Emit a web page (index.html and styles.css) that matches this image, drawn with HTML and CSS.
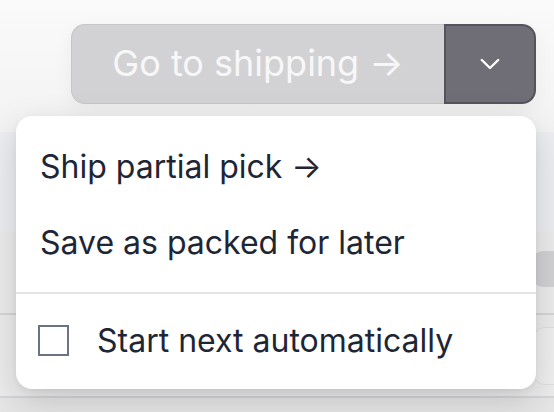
FILE: index.html
```html
<!DOCTYPE html>
<html>
<head>
<meta charset="utf-8">
<link rel="stylesheet" href="styles.css">
</head>
<body>
<div class="page">
  <div class="top"></div>
  <div class="card"></div>
  <div class="row row-a"><span class="pill"></span></div>
  <div class="row row-b"><span class="box"></span></div>
  <div class="bottom"></div>
</div>

<div class="split">
  <button class="main" disabled>Go to shipping →</button>
  <button class="toggle" aria-label="More options">
    <svg width="24" height="24" viewBox="0 0 24 24" fill="none"><path d="M3.8 8 12 16 20.2 8" stroke="#fff" stroke-width="2.4" stroke-linecap="round" stroke-linejoin="round"/></svg>
  </button>
</div>

<div class="menu">
  <div class="item">Ship partial pick →</div>
  <div class="item">Save as packed for later</div>
  <div class="sep"></div>
  <label class="check"><span class="cb"></span>Start next automatically</label>
</div>
</body>
</html>
```
FILE: styles.css
```css
html, body { margin: 0; padding: 0; }
body {
  width: 554px; height: 412px; overflow: hidden;
  background: #f4f4f5;
  font-family: Inter, "Noto Sans", sans-serif;
  position: relative;
}
.page { display: flex; flex-direction: column; height: 412px; }
.top { height: 132px; background: linear-gradient(180deg, #fafafa, #f3f3f4); }
.card { height: 100px; background: #eceef1; }
.row { height: 81px; border-bottom: 2px solid #d6d6da; background: #ececed; display: flex; justify-content: flex-end; align-items: center; }
.pill { width: 24px; height: 36px; margin-top: -8px; border-radius: 14px 0 0 14px; background: #d2d2d5; }
.box { width: 20px; height: 56px; border: 1px solid #e0e0e2; border-right: none; border-radius: 12px 0 0 12px; background: #efefef; }
.bottom { flex: 1; background: #e6e6e7; }

.split {
  position: absolute; left: 71px; top: 24px;
  display: flex; height: 80px;
  box-shadow: 0 6px 20px rgba(0,0,0,0.05);
  border-radius: 14px;
}
.split button { font-family: inherit; margin: 0; cursor: pointer; }
.main {
  width: 373px; height: 80px;
  background: #d2d2d5; border: 1px solid #c6c6c9; border-right: none;
  border-radius: 14px 0 0 14px;
  color: #f7f7f8; font-size: 36px; font-weight: 400;
  padding: 0 0 2px 0;
}
.toggle {
  width: 92px; height: 80px;
  background: #6f6e77; border: 2px solid #55545c;
  border-radius: 0 14px 14px 0;
  display: flex; align-items: center; justify-content: center;
  padding: 0;
}

.menu {
  position: absolute; left: 16px; top: 116px;
  width: 520px; height: 273px;
  background: #fff; border-radius: 16px;
  box-shadow: 0 12px 36px rgba(0,0,0,0.16), 0 2px 6px rgba(0,0,0,0.05);
  display: flex; flex-direction: column;
  color: #1e2635; font-size: 32px;
}
.item { height: 76px; display: flex; align-items: center; padding: 0 24px; }
.item:first-child { margin-top: 12px; }
.sep { height: 2px; background: #e4e4e8; margin-top: 12px; }
.check { flex: 1; display: flex; align-items: center; padding: 0 22px; gap: 28px; padding-bottom: 2px; }
.cb { width: 27px; height: 27px; border: 2px solid #6b7280; flex: none; }
```
